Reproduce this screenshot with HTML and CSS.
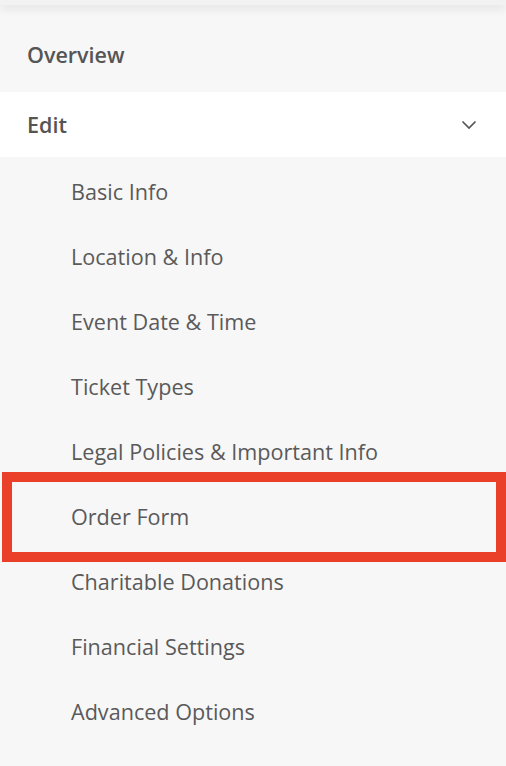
FILE: index.html
```html
<!DOCTYPE html>
<html lang="en">
<head>
<meta charset="utf-8">
<title>Event menu</title>
<link rel="stylesheet" href="styles.css">
</head>
<body>
<div class="topbar"></div>
<nav class="menu">
  <div class="item top">Overview</div>
  <div class="item top open">
    <span>Edit</span>
    <svg class="chev" width="16" height="10" viewBox="0 0 16 10" aria-hidden="true"><path d="M1.5 1.5 L8 8 L14.5 1.5" fill="none" stroke="#555" stroke-width="1.7"/></svg>
  </div>
  <ul class="sub">
    <li>Basic Info</li>
    <li>Location &amp; Info</li>
    <li>Event Date &amp; Time</li>
    <li>Ticket Types</li>
    <li>Legal Policies &amp; Important Info</li>
    <li class="highlight">Order Form</li>
    <li>Charitable Donations</li>
    <li>Financial Settings</li>
    <li>Advanced Options</li>
  </ul>
</nav>
</body>
</html>
```
FILE: styles.css
```css
html, body {
  margin: 0;
  padding: 0;
  background: #f7f7f7;
  height: 100%;
  overflow: hidden;
}
body {
  font-family: "Open Sans", "Noto Sans", sans-serif;
  color: #555;
}
.topbar {
  height: 5px;
  background: #f2f2f2;
  box-shadow: 0 3px 10px rgba(0, 0, 0, 0.12);
  position: relative;
  z-index: 1;
}
.menu {
  padding-top: 17px;
}
.item {
  height: 65px;
  display: flex;
  align-items: center;
  justify-content: space-between;
  padding: 0 29px 0 27px;
  font-size: 21.5px;
  font-weight: 600;
  color: #555;
}
.item.top:first-child {
  margin-bottom: 5px;
}
.item.open {
  background: #fff;
}
.chev {
  display: block;
}
.sub {
  list-style: none;
  margin: 0;
  padding: 2px 0 0 0;
}
.sub li {
  height: 65px;
  display: flex;
  align-items: center;
  padding-left: 71px;
  font-size: 21.6px;
  font-weight: 400;
  color: #5a5a5a;
}
.sub li.highlight {
  position: relative;
}
.sub li.highlight::after {
  content: "";
  position: absolute;
  left: 2px;
  right: 0;
  top: -12px;
  bottom: -13px;
  border: 10px solid #ea4029;
}
```
